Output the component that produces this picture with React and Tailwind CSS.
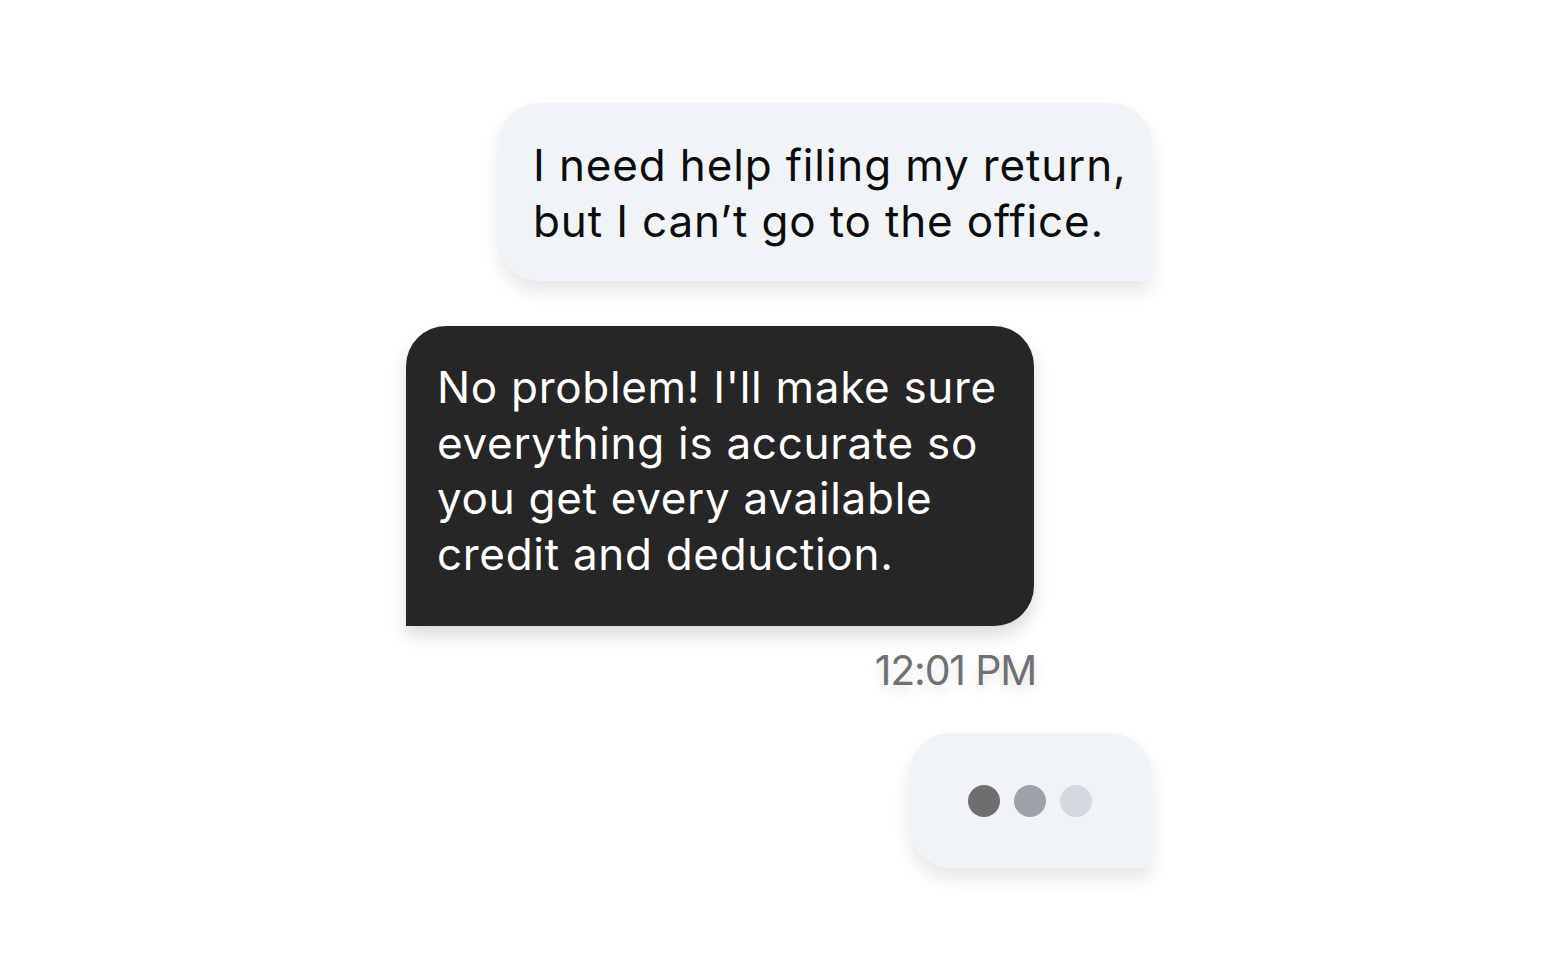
export default function App() {
  const font = { fontFamily: 'Inter, "Liberation Sans", sans-serif' };
  return (
    <div className="w-[1560px] h-[960px] bg-white overflow-hidden" style={font}>
      <div className="ml-[406px] w-[745px] pt-[103px] flex flex-col">
        <div className="self-end w-[652px] h-[178px] bg-[#f1f4f7] rounded-t-[40px] rounded-bl-[40px] rounded-br-none shadow-[0_10px_18px_rgba(0,0,0,0.10)] pl-[34px] pt-[34px]">
          <p className="text-[44px] leading-[56px] text-[#0d0d0d] tracking-[0.85px]">
            I need help filing my return,
            <br />
            but I can’t go to the office.
          </p>
        </div>

        <div className="mt-[45px] self-start w-[628px] h-[300px] bg-[#262626] rounded-t-[40px] rounded-br-[40px] rounded-bl-none shadow-[0_10px_18px_rgba(0,0,0,0.14)] pl-[31px] pt-[34px]">
          <p className="text-[44px] leading-[55.7px] text-white tracking-[0.7px]">
            No problem! I'll make sure
            <br />
            everything is accurate so
            <br />
            you get every available
            <br />
            credit and deduction.
          </p>
        </div>

        <div className="mt-[20px] w-[630px] text-right text-[41px] leading-[48px] text-[#707070] tracking-[-1.2px] [text-shadow:0_6px_12px_rgba(0,0,0,0.12)]">
          12:01 PM
        </div>

        <div className="mt-[39px] self-end w-[241px] h-[135px] bg-[#f1f4f7] rounded-t-[40px] rounded-bl-[40px] rounded-br-none shadow-[0_10px_18px_rgba(0,0,0,0.10)] flex items-center justify-center gap-[14px] pr-[2px]">
          <span className="w-[32px] h-[32px] rounded-full bg-[#6e6e6e]" />
          <span className="w-[32px] h-[32px] rounded-full bg-[#9fa3a9]" />
          <span className="w-[32px] h-[32px] rounded-full bg-[#d5d8de]" />
        </div>
      </div>
    </div>
  );
}
